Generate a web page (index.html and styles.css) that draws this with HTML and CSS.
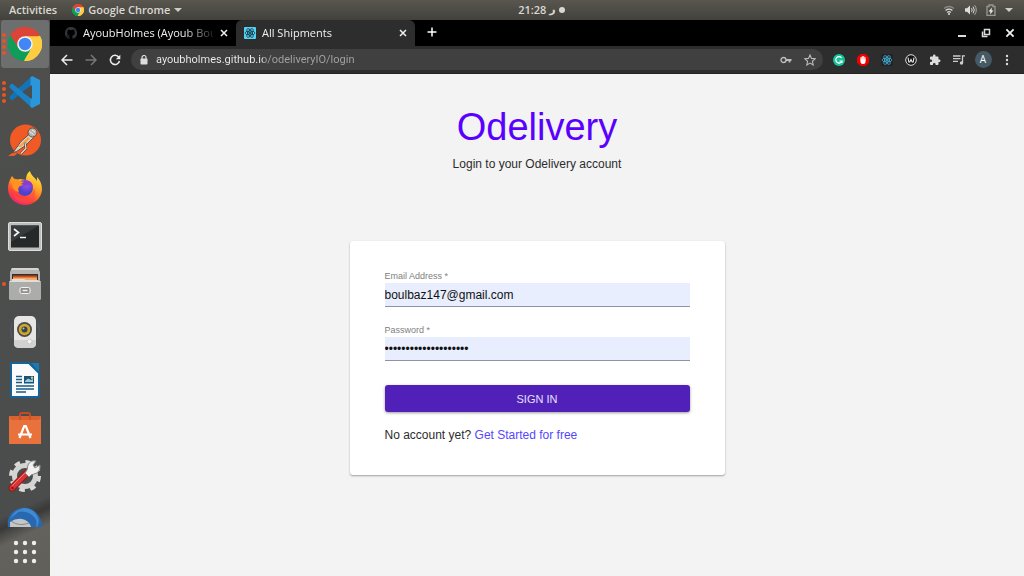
FILE: index.html
```html
<!DOCTYPE html>
<html lang="en">
<head>
<meta charset="utf-8">
<title>All Shipments</title>
<link rel="stylesheet" href="styles.css">
</head>
<body>
<svg class="defs" aria-hidden="true">
    <symbol id="chrome" viewBox="0 0 48 48">
        <path d="M24 24L3.2 12A24 24 0 0 1 44.8 12z" fill="#db4437"/>
        <path d="M24 24V48A24 24 0 0 1 3.2 12z" fill="#0f9d58"/>
        <path d="M24 24L44.8 12A24 24 0 0 1 24 48z" fill="#ffcd40"/>
        <path d="M24 13H45.3A24 24 0 0 0 3.2 12L14.5 29.5z" fill="#db4437"/>
        <path d="M14.5 29.5L3.2 12A24 24 0 0 0 22.5 48L33.5 29.5L24 35z" fill="#0f9d58"/>
        <path d="M24 13H45.3A24 24 0 0 1 22.5 48L33.5 29.5z" fill="#ffcd40"/>
        <circle cx="24" cy="24" r="11" fill="#f1f1f1"/>
        <circle cx="24" cy="24" r="8.8" fill="#4285f4"/>
    </symbol>
    <symbol id="react" viewBox="0 0 24 24">
        <g fill="none" stroke="currentColor" stroke-width="1.5">
            <ellipse cx="12" cy="12" rx="10" ry="4"/>
            <ellipse cx="12" cy="12" rx="10" ry="4" transform="rotate(60 12 12)"/>
            <ellipse cx="12" cy="12" rx="10" ry="4" transform="rotate(120 12 12)"/>
        </g>
        <circle cx="12" cy="12" r="2.2" fill="currentColor"/>
    </symbol>
    <symbol id="close" viewBox="0 0 10 10">
        <path d="M2 2l6 6M8 2l-6 6" fill="none" stroke="currentColor" stroke-width="1.5"/>
    </symbol>
</svg>

<header class="topbar">
    <div class="topbar-left">
        <button class="activities">Activities</button>
        <button class="app-menu">
            <svg width="12" height="12"><use href="#chrome"/></svg>
            Google Chrome
            <svg width="8" height="4" viewBox="0 0 8 4"><path d="M0 0h8L4 4z" fill="#ccc"/></svg>
        </button>
    </div>
    <button class="clock">21:28 <span class="day">ر</span><span class="dot"></span></button>
    <button class="status" aria-label="System menu">
        <svg width="12" height="12" viewBox="0 0 12 12" fill="none" stroke="#ddd" stroke-width="1.3"><path d="M1 4.4Q6 .6 11 4.4" stroke="#8b8983"/><path d="M2.6 6.4Q6 3.8 9.4 6.4M4.2 8.4Q6 7 7.8 8.4"/><circle cx="6" cy="10" r="1" fill="#ddd" stroke="none"/></svg>
        <svg width="13" height="12" viewBox="0 0 13 12" fill="none" stroke="#ddd"><path d="M1 4.2h2L6 1.5v9L3 7.8H1z" fill="#ddd" stroke="none"/><path d="M7.5 4.2q1.4 1.8 0 3.6M9 2.6q2.6 3.4 0 6.8"/><path d="M10.6 1.2q3.4 4.8 0 9.6" stroke="#aaa"/></svg>
        <svg width="10" height="12" viewBox="0 0 10 12"><path d="M1 2.5h2V1h4v1.5h2v9H1z" fill="none" stroke="#999791" stroke-width="1.3"/><path d="M6 3.500L2.500 7.500h2L4 10.500l3.500-4h-2z" fill="#eee"/></svg>
        <svg width="8" height="4" viewBox="0 0 8 4"><path d="M0 0h8L4 4z" fill="#ccc"/></svg>
    </button>
</header>

<div class="desktop">
    <nav class="dock" aria-label="Dock">
        <div class="dock-apps">
        <button class="app active" aria-label="Google Chrome">
            <span class="dots"><i></i><i></i><i></i><i></i></span>
            <svg width="34" height="34"><use href="#chrome"/></svg>
        </button>
        <button class="app" aria-label="Visual Studio Code">
            <span class="dots"><i></i><i></i><i></i><i></i></span>
            <svg width="34" height="34" viewBox="0 0 34 34">
                <path d="M24 1L1.500 21.500v2l2.500 2L25 9z" fill="#1273b8"/>
                <path d="M24 33L1.500 12.500v-2l2.500-2L25 25z" fill="#1b82c8"/>
                <path d="M24 1l8 4v24l-8 4-1.500-1.500V2.500z" fill="#2c96db"/>
                <path d="M24 10v14l-9.500-7z" fill="#4c4e4d"/>
            </svg>
        </button>
        <button class="app" aria-label="Postman">
            <svg width="34" height="34" viewBox="0 0 34 34">
                <circle cx="17.500" cy="17" r="15.500" fill="#f15a24"/>
                <path d="M0 33l7-5 2 3-3 2z" fill="#ec5b29"/>
                <path d="M5 29.500l8-11 9-8 3.500 4-8 8-9 6z" fill="#d9d4cb" stroke="#4a3f39" stroke-width=".8"/>
                <path d="M10 24l10-10 2 2-9 8z" fill="#f9a13a"/>
                <circle cx="24.500" cy="9.500" r="4.500" fill="#b5b0a8" stroke="#4a3f39" stroke-width=".8"/>
                <path d="M21.500 8.500l4 3M24 7l3 2" stroke="#f5f2eb"/>
                <path d="M17 19.500l1 6-5 5" fill="none" stroke="#4a3f39" stroke-width="2.400"/>
                <path d="M17 19.500l1 6-5 5" fill="none" stroke="#e8e4dc" stroke-width="1.200"/>
            </svg>
        </button>
        <button class="app" aria-label="Firefox">
            <svg width="36" height="36" viewBox="0 0 36 36">
                <defs>
                    <linearGradient id="fox" x1=".8" y1="0" x2=".3" y2="1"><stop offset="0" stop-color="#ffed42"/><stop offset=".45" stop-color="#ff9a25"/><stop offset=".75" stop-color="#ff4238"/><stop offset="1" stop-color="#e72676"/></linearGradient>
                    <radialGradient id="globe" cx=".6" cy=".3"><stop offset="0" stop-color="#a04ef0"/><stop offset="1" stop-color="#5141c8"/></radialGradient>
                </defs>
                <path d="M5 6l3 4 5-1 6 1c0-4 1-7 4-9 1 5 5 6 7 10V7c3 3 5 7 5 12a17 16 0 0 1-34 0c0-5 1-8 4-13z" fill="url(#fox)"/>
                <circle cx="18" cy="18" r="8" fill="url(#globe)"/>
                <path d="M3 10q6-3 9 1l6 1q-1 3-5 4-3 2-1 6-6-1-7-7z" fill="#ff9320"/>
                <path d="M18 11q6-1 8 5-4-2-7 0l-5-2z" fill="#8b3ccc"/>
                <path d="M5 19q2 9 12 9 9-1 10-10 4 12-7 15Q7 34 5 19z" fill="#ff493f" opacity=".6"/>
            </svg>
        </button>
        <button class="app" aria-label="Terminal">
            <svg width="34" height="30" viewBox="0 0 34 30">
                <rect x=".5" y="1.500" width="33" height="28" rx="1.500" fill="#bdbebc" stroke="#dededc"/>
                <rect x="3" y="4.500" width="28" height="22" fill="#25292a"/>
                <path d="M3 4.500h28L3 21z" fill="#373b3c"/>
                <path d="M6 8l4.500 3.500L6 15M12 16.500h6" fill="none" stroke="#f4f4f4" stroke-width="1.700"/>
            </svg>
        </button>
        <button class="app" aria-label="Files">
            <span class="dots"><i></i></span>
            <svg width="34" height="34" viewBox="0 0 34 34">
                <path d="M4 1h26l2 4v12H2V5z" fill="#b5b6b3"/>
                <path d="M4 1h26l1 2H3z" fill="#d4d5d2"/>
                <rect x="4" y="7" width="26" height="7" fill="#342d28"/>
                <path d="M5 8.500h24v4H5z" fill="#ca4b20"/>
                <path d="M5 10.500h24V14H5z" fill="#f1ac68"/>
                <path d="M4 12h12l2 1h12v2H4z" fill="#e6ddd2"/>
                <rect x="1" y="14" width="32" height="19" rx="1.500" fill="#acadab"/>
                <path d="M1.500 14.500h31" stroke="#dededc"/>
                <rect x="12" y="20.500" width="10" height="6" rx="1.500" fill="#8e8f8d" stroke="#f3f3f2"/>
                <path d="M14.500 23.500h5" stroke="#eee" stroke-width="1.500"/>
            </svg>
        </button>
        <button class="app" aria-label="Rhythmbox">
            <svg width="36" height="34" viewBox="0 0 36 34">
                <path d="M5 8Q2 15 5 23M31 8q3 7 0 15" fill="none" stroke="#4b6488" opacity=".7"/>
                <rect x="7" y="1" width="22" height="32" rx="5" fill="#e6e6e4"/>
                <path d="M7 25h22v4q0 4-5 4H12q-5 0-5-4z" fill="#d2d2d0"/>
                <circle cx="17.500" cy="14.500" r="7.500" fill="#4c4b45"/>
                <circle cx="17.500" cy="14.500" r="5.800" fill="#c9a730"/>
                <circle cx="17.500" cy="14.500" r="3" fill="#39434c"/>
                <circle cx="16.500" cy="13.500" r="1" fill="#aebdca"/>
                <circle cx="22.500" cy="26.500" r="2.400" fill="#f2f2f1" stroke="#bbb" stroke-width=".6"/>
            </svg>
        </button>
        <button class="app" aria-label="LibreOffice Writer">
            <svg width="30" height="36" viewBox="0 0 30 36">
                <path d="M2 1h17l10 10v22q0 2-2 2H2q-1 0-1-1V2q0-1 1-1z" fill="#fafafa" stroke="#14639c" stroke-width="2"/>
                <path d="M21 1h8v9z" fill="#1679b8"/>
                <path d="M6 14.500h6M6 17.500h6M6 20.500h6M6 24h18M6 27h18M6 30h10" stroke="#185b86" stroke-width="1.500"/>
                <rect x="14" y="14" width="10" height="7.500" fill="#16537c"/>
                <path d="M15 19l3-2.500 3 1.500 2-1v3h-8z" fill="#9bcbe0"/>
                <circle cx="22" cy="15.800" r="1.200" fill="#edc64a"/>
            </svg>
        </button>
        <button class="app" aria-label="Ubuntu Software">
            <svg width="32" height="34" viewBox="0 0 32 34">
                <path d="M11 9V4q0-2 2-2h6q2 0 2 2v5" fill="none" stroke="#cc5025" stroke-width="2"/>
                <path d="M0 5h32v28H0z" fill="#e9713c"/>
                <path d="M0 5h32l-2 4H2z" fill="#d9602f"/>
                <path d="M11 9V4q0-2 2-2h6q2 0 2 2v5" fill="none" stroke="#bd4720"/>
                <path d="M10.500 27l4.700-12h1.600L21.500 27M9 23.500h14" fill="none" stroke="#fff" stroke-width="2.200"/>
            </svg>
        </button>
        <button class="app" aria-label="Settings">
            <svg width="34" height="34" viewBox="0 0 34 34">
                <circle cx="17" cy="17" r="14" fill="none" stroke="#dadad8" stroke-width="4" stroke-dasharray="5.500 5.500"/>
                <circle cx="17" cy="17" r="10.500" fill="none" stroke="#d4d4d2" stroke-width="5"/>
                <path d="M4 29L22 11" stroke="#941a1a" stroke-width="7" stroke-linecap="round"/>
                <path d="M4 29L21 12" stroke="#dc3434" stroke-width="5" stroke-linecap="round"/>
                <path d="M4 27L18 13" stroke="#f07a72"/>
                <path d="M19 11l1-5q2-5 8-4l-3 4 2 3 5-3q1 5-3 8l-6 2-2 2-4-4z" fill="#f0f0ef" stroke="#888985"/>
                <circle cx="4.500" cy="29" r="1.200" fill="#7e1717"/>
            </svg>
        </button>
        <button class="app" aria-label="Thunderbird">
            <svg width="36" height="34" viewBox="0 0 36 34">
                <path d="M1 20Q-1 5 14 1q15-2 21 14 1 6-3 13l-8 6H8z" fill="#2868b0"/>
                <path d="M3 12Q8 1 19 1q-5 1-8 4 10-2 17 6 3 5 0 12 7-8 1-16-4-6-13-6z" fill="#3f8ad2"/>
                <path d="M3 15q6-4 12-3 9 2 10 12l-1 8-12-1L3 22z" fill="#c4c5c6"/>
                <path d="M4 14q8 6 18 2" fill="none" stroke="#85898d"/>
            </svg>
        </button>
        </div>
        <button class="show-apps" aria-label="Show Applications">
            <svg width="24" height="24" viewBox="0 0 24 24" fill="#f0efed"><circle cx="3" cy="3" r="2.200"/><circle cx="12" cy="3" r="2.200"/><circle cx="21" cy="3" r="2.200"/><circle cx="3" cy="12" r="2.200"/><circle cx="12" cy="12" r="2.200"/><circle cx="21" cy="12" r="2.200"/><circle cx="3" cy="21" r="2.200"/><circle cx="12" cy="21" r="2.200"/><circle cx="21" cy="21" r="2.200"/></svg>
        </button>
    </nav>

    <div class="browser">
        <div class="tabs">
            <div class="tab">
                <svg width="12" height="12" viewBox="0 0 16 16"><path fill="#30363c" d="M8 0a8 8 0 0 0-2.500 15.600c.4.1.5-.2.5-.4v-1.400c-2.200.5-2.700-1-2.700-1-.4-.9-.9-1.200-.9-1.200-.7-.5.1-.5.1-.5.800.1 1.200.8 1.200.8.7 1.300 1.900.9 2.300.7.1-.5.300-.9.500-1.100-1.800-.2-3.600-.9-3.600-4 0-.9.300-1.600.8-2.100-.1-.2-.4-1 .1-2.100 0 0 .7-.2 2.200.8a8 8 0 0 1 4 0c1.500-1 2.200-.8 2.200-.8.500 1.100.2 1.900.1 2.100.5.500.8 1.200.8 2.100 0 3.100-1.900 3.800-3.600 4 .3.300.5.800.5 1.500v2.200c0 .2.100.5.500.4A8 8 0 0 0 8 0z"/></svg>
                <button class="tab-title">AyoubHolmes (Ayoub Bou</button>
                <button class="tab-close" aria-label="Close tab"><svg width="10" height="10"><use href="#close"/></svg></button>
            </div>
            <div class="tab current">
                <svg class="favicon" width="12" height="12"><use href="#react"/></svg>
                <button class="tab-title">All Shipments</button>
                <button class="tab-close" aria-label="Close tab"><svg width="10" height="10"><use href="#close"/></svg></button>
            </div>
            <button class="icon new-tab" aria-label="New tab"><svg width="10" height="10" viewBox="0 0 10 10"><path d="M5 .5v9M.5 5h9" stroke="#fff" stroke-width="1.500"/></svg></button>
            <div class="window-buttons">
                <button class="icon" aria-label="Minimize"><svg width="10" height="10" viewBox="0 0 10 10"><path d="M1 8h8" stroke="#ddd" stroke-width="2"/></svg></button>
                <button class="icon" aria-label="Restore"><svg width="10" height="10" viewBox="0 0 10 10" fill="none" stroke="#ddd" stroke-width="1.500"><path d="M3.500 1.500h5v5h-5zM1.500 3.500v5h5"/></svg></button>
                <button class="icon" aria-label="Close"><svg width="12" height="12"><use href="#close"/></svg></button>
            </div>
        </div>

        <div class="toolbar">
            <button class="icon" aria-label="Back"><svg width="12" height="12" viewBox="0 0 12 12" fill="none" stroke="#eee" stroke-width="1.500"><path d="M11.500 6H1.500M6 1L1 6l5 5"/></svg></button>
            <button class="icon" aria-label="Forward"><svg width="12" height="12" viewBox="0 0 12 12" fill="none" stroke="#777" stroke-width="1.500"><path d="M.5 6h10M6 1l5 5-5 5"/></svg></button>
            <button class="icon" aria-label="Reload"><svg width="12" height="12" viewBox="0 0 12 12"><path d="M9.800 3.300A4.600 4.600 0 1 0 10.500 7" fill="none" stroke="#eee" stroke-width="1.500"/><path d="M11.300.8v4.500H6.800z" fill="#eee"/></svg></button>
            <div class="address">
                <svg width="8" height="10" viewBox="0 0 8 10"><rect x=".5" y="3.500" width="7" height="6" rx=".8" fill="#ddd"/><path d="M2 4V2.500a2 2 0 0 1 4 0V4" fill="none" stroke="#ddd" stroke-width="1.200"/></svg>
                <input class="url" type="text" aria-label="Address" value="ayoubholmes.github.io/odeliveryIO/login">
                <button class="icon" aria-label="Saved passwords"><svg width="12" height="8" viewBox="0 0 12 8" fill="none" stroke="#bbb" stroke-width="1.400"><circle cx="3.500" cy="4" r="2.500"/><path d="M6 4h5.500M9.500 4v2.500" stroke-width="1.800"/></svg></button>
                <button class="icon" aria-label="Bookmark"><svg width="12" height="12" viewBox="0 0 12 12"><path d="M6 1l1.500 3.400 3.700.4-2.800 2.500.8 3.700L6 9.100 2.800 11l.8-3.700L.8 4.800l3.700-.4z" fill="none" stroke="#bbb" stroke-width="1.100"/></svg></button>
            </div>
            <button class="icon" aria-label="Grammarly"><svg width="12" height="12" viewBox="0 0 12 12"><circle cx="6" cy="6" r="6" fill="#15c39a"/><path d="M8.500 3.800A3.200 3.200 0 1 0 9 7H6.500M9 7v2" fill="none" stroke="#fff" stroke-width="1.200"/></svg></button>
            <button class="icon" aria-label="AdBlock"><svg width="12" height="12" viewBox="0 0 12 12"><path d="M3.500 0h5L12 3.500v5L8.500 12h-5L0 8.500v-5z" fill="#f20000"/><path d="M4 6V3.500M5.300 6V2.500M6.700 6V2.500M8 6.500V3.500" stroke="#fff" stroke-width="1.100" stroke-linecap="round"/><path d="M3.500 5.500h5v2q0 2.500-2.500 2.500T3.500 7.500z" fill="#fff"/></svg></button>
            <button class="icon" aria-label="React Developer Tools"><svg class="react-ext" width="12" height="12"><use href="#react"/></svg></button>
            <button class="icon" aria-label="WhatFont"><svg width="12" height="12" viewBox="0 0 12 12"><circle cx="6" cy="6" r="5.300" fill="#151515" stroke="#ddd"/><path d="M3 3.500l.8 4.500h1L6 5.500 7.200 8h1L9 3.500" fill="none" stroke="#eee" stroke-width="1.100"/></svg></button>
            <button class="icon" aria-label="Extensions"><svg width="12" height="12" viewBox="0 0 24 24"><path fill="#ddd" d="M20.500 11H19V7a2 2 0 0 0-2-2h-4V3.500a2.500 2.500 0 0 0-5 0V5H4a2 2 0 0 0-2 2v3.800h1.500a2.700 2.700 0 0 1 0 5.400H2V20c0 1.100.9 2 2 2h3.800v-1.500a2.700 2.700 0 0 1 5.400 0V22H17a2 2 0 0 0 2-2v-4h1.500a2.500 2.500 0 0 0 0-5z"/></svg></button>
            <button class="icon" aria-label="Media controls"><svg width="12" height="12" viewBox="0 0 12 12"><path d="M0 2h7.500M0 4.700h7.500M0 7.400h5M9.500 9V1.800H12" fill="none" stroke="#ccc" stroke-width="1.300"/><circle cx="8.500" cy="9" r="1.700" fill="#ccc"/></svg></button>
            <button class="icon" aria-label="Profile"><span class="avatar">A</span></button>
            <button class="icon" aria-label="Menu"><svg width="4" height="12" viewBox="0 0 4 12" fill="#ddd"><circle cx="2" cy="2" r="1.200"/><circle cx="2" cy="6" r="1.200"/><circle cx="2" cy="10" r="1.200"/></svg></button>
        </div>

        <main class="page">
            <h1>Odelivery</h1>
            <p class="subtitle">Login to your Odelivery account</p>
            <form class="card">
                <div class="field">
                    <label for="email">Email Address *</label>
                    <input id="email" type="email" value="boulbaz147@gmail.com">
                </div>
                <div class="field">
                    <label for="password">Password *</label>
                    <input id="password" type="password" value="12345678901234567890">
                </div>
                <button class="sign-in" type="button">SIGN IN</button>
                <p class="signup">No account yet? <a href="#">Get Started for free</a></p>
            </form>
        </main>
    </div>
</div>
</body>
</html>
```
FILE: styles.css
```css
* {
    box-sizing: border-box;
}
body {
    margin: 0;
    min-height: 100vh;
    display: flex;
    flex-direction: column;
    font-family: "Open Sans", "Noto Sans", sans-serif;
    font-size: 11px;
    background: #f3f3f3;
}
button {
    display: flex;
    align-items: center;
    padding: 0;
    border: 0;
    background: none;
    font: inherit;
    color: inherit;
}
svg {
    display: block;
    flex: none;
}
.defs {
    position: absolute;
    width: 0;
    height: 0;
}

/* top panel */
.topbar {
    display: flex;
    align-items: center;
    height: 20px;
    padding-bottom: 1px;
    background: linear-gradient(#58564f, #42413b);
    color: #dad8d2;
    font-weight: 600;
}
.topbar-left {
    flex: 0 0 50.6%;
    display: flex;
    gap: 15px;
    padding-left: 9px;
}
.app-menu {
    gap: 4px;
}
.clock .day {
    font-family: "DejaVu Sans", sans-serif;
    margin: 0 3px;
}
.clock .dot {
    width: 6px;
    height: 6px;
    border-radius: 50%;
    background: #dad8d2;
}
.status {
    gap: 9px;
    margin-left: auto;
    padding-right: 11px;
}

.desktop {
    flex: 1;
    display: flex;
}

/* dock */
.dock {
    flex: 0 0 50px;
    display: flex;
    flex-direction: column;
    background: linear-gradient(155deg, #4e4f4d, #4a4d4c 86%, #393a38 88%, #64625d 91%, #615f5a);
}
.dock-apps {
    flex: 1 1 0;
    overflow: hidden;
}
.app {
    position: relative;
    justify-content: center;
    width: 48px;
    height: 48px;
    margin: 0 1px;
    border-radius: 3px;
}
.app.active {
    background: #6c6f6d;
}
.dots {
    position: absolute;
    left: 1px;
    display: grid;
    gap: 2px;
}
.dots i {
    width: 4px;
    height: 4px;
    border-radius: 50%;
    background: #e95420;
}
.show-apps {
    flex: 0 0 49px;
    justify-content: center;
}

/* browser window */
.browser {
    flex: 1;
    min-width: 0;
    display: flex;
    flex-direction: column;
}
.tabs {
    display: flex;
    height: 26px;
    background: #000;
    color: #f0f0f0;
}
.tab {
    display: flex;
    align-items: center;
    gap: 6px;
    width: 186px;
    padding: 0 7px 1px 15px;
}
.tab.current {
    width: 179px;
    padding-left: 8px;
    border-radius: 6px 6px 0 0;
    background: #2d2d2d;
}
.tab-title {
    flex: 1;
    min-width: 0;
    white-space: nowrap;
    -webkit-mask-image: linear-gradient(90deg, #000 100px, transparent 135px);
}
.favicon {
    border-radius: 1px;
    background: #53d3f5;
    color: #17313b;
}
.icon {
    flex: 0 0 24px;
    height: 24px;
    justify-content: center;
}
.new-tab {
    margin-left: 5px;
}
.window-buttons {
    display: flex;
    margin: 1px 2px 0 auto;
}
.toolbar {
    display: flex;
    align-items: center;
    height: 28px;
    padding: 0 5px;
    background: #2d2d2d;
    border-bottom: 1px solid #242424;
}
.address {
    flex: 1;
    display: flex;
    align-items: center;
    height: 21px;
    margin: 0 4px;
    padding: 0 1px 0 9px;
    border-radius: 11px;
    background: #404040;
}
.url {
    flex: 1;
    min-width: 0;
    margin-left: 8px;
    padding: 0;
    border: 0;
    outline: 0;
    font: inherit;
    font-family: Roboto, "Open Sans", sans-serif;
    /* host is brighter than the path */
    background: linear-gradient(90deg, #f0f0f0 107px, #a5a5a5 107px);
    -webkit-background-clip: text;
    color: transparent;
}
.react-ext {
    background: #202428;
    color: #45b5d8;
}
.avatar {
    width: 17px;
    height: 17px;
    border-radius: 50%;
    background: #455a64;
    color: #fff;
    font-size: 10px;
    line-height: 17px;
    text-align: center;
}

/* login page */
.page {
    flex: 1;
    padding: 31px 16px;
    background: #f3f3f3;
    color: #2c2c2c;
    font-family: "Liberation Sans", Arial, sans-serif;
    font-size: 12px;
    line-height: 18px;
}
h1 {
    margin: 0 0 6px;
    color: #5a00ff;
    font-size: 38px;
    font-weight: normal;
    line-height: 44px;
    text-align: center;
}
.subtitle {
    margin: 0 0 68px;
    text-align: center;
}
.card {
    max-width: 375px;
    margin: 0 auto;
    padding: 29px 35px 30px;
    border-radius: 3px;
    background: #fff;
    box-shadow: 0 1px 2px rgba(0, 0, 0, 0.35);
}
.field {
    margin-bottom: 17px;
}
.field label {
    display: block;
    color: #808080;
    font-size: 9px;
    line-height: 13px;
}
.field input {
    display: block;
    width: 100%;
    height: 24px;
    padding: 0;
    border: 0;
    border-bottom: 1px solid #8e93a3;
    border-radius: 0;
    background: #e8eefe;
    color: #111;
    font: inherit;
}
.sign-in {
    justify-content: center;
    width: 100%;
    height: 27px;
    margin-top: 24px;
    border-radius: 3px;
    background: #5020b8;
    box-shadow: 0 1px 3px rgba(0, 0, 0, 0.4);
    color: #e8e0f8;
    font-size: 11px;
}
.signup {
    margin: 14px 0 0;
    padding-bottom: 1px;
}
.signup a {
    color: #5548ff;
    text-decoration: none;
}
```
